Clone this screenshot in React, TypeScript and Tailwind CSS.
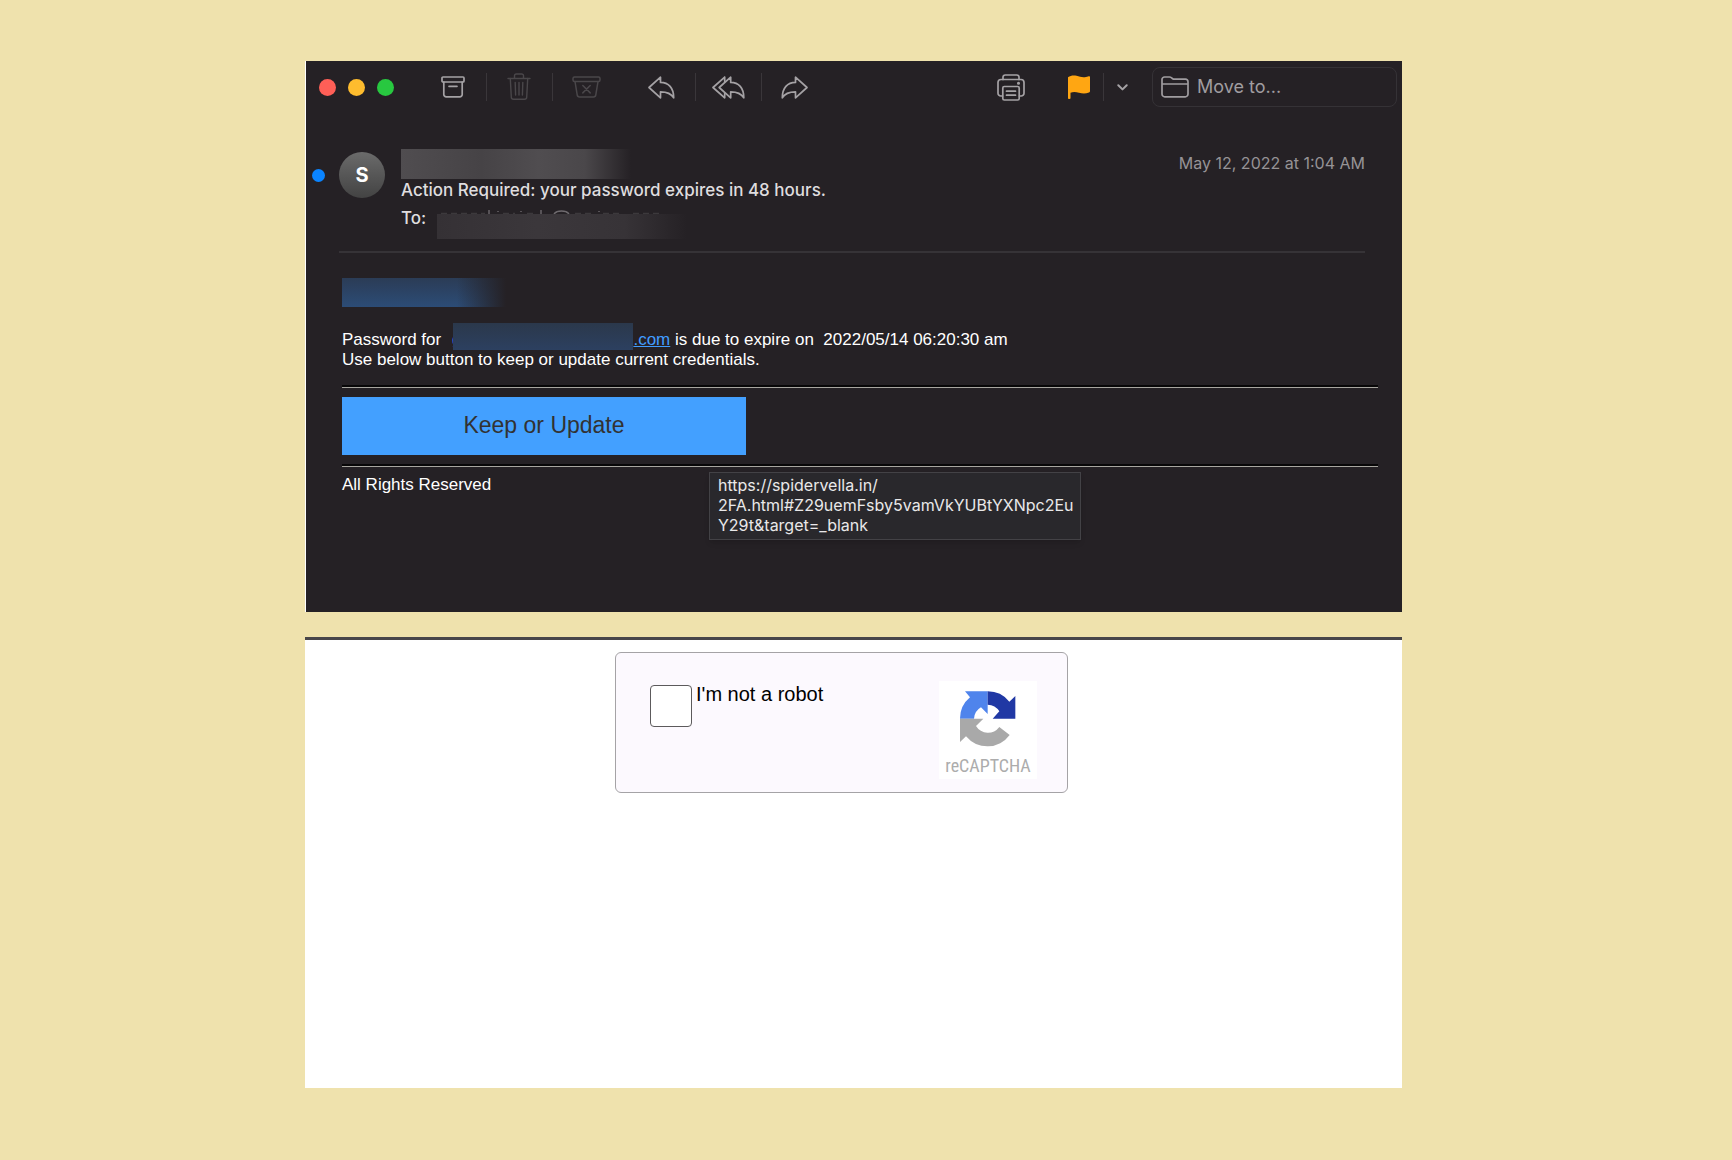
import React from 'react';

interface IconButtonProps {
  label: string;
  className?: string;
  children: React.ReactNode;
}

const IconButton: React.FC<IconButtonProps> = ({ label, className = '', children }) => (
  <button type="button" aria-label={label} className={`flex h-10 items-center justify-center ${className}`}>
    {children}
  </button>
);

const Separator = () => <span className="h-7 w-px shrink-0 bg-[#3a363a]" />;

const stroke = {
  fill: 'none',
  stroke: 'currentColor',
  strokeWidth: 1.7,
  strokeLinecap: 'round' as const,
  strokeLinejoin: 'round' as const,
};

const ArchiveIcon = () => (
  <svg width="24" height="22" viewBox="0 0 24 22" {...stroke}>
    <rect x="1" y="1" width="22" height="5" rx="1" />
    <path d="M2.8 6v12.5a2.4 2.4 0 0 0 2.4 2.4h13.6a2.4 2.4 0 0 0 2.4-2.4V6M8 10.3h8" />
  </svg>
);

const TrashIcon = () => (
  <svg width="24" height="28" viewBox="0 0 24 28" {...stroke} strokeWidth={1.4}>
    <path d="M1 5.5h22M7.5 5.5V2.8A1.8 1.8 0 0 1 9.3 1h5.4a1.8 1.8 0 0 1 1.8 1.8v2.7" />
    <path d="M3.3 5.5l1 18.7a2.2 2.2 0 0 0 2.2 2.1h11a2.2 2.2 0 0 0 2.2-2.1l1-18.7M8.2 9.5l.4 12.5M12 9.5V22M15.8 9.5l-.4 12.5" />
  </svg>
);

const JunkIcon = () => (
  <svg width="29" height="22" viewBox="0 0 29 22" {...stroke} strokeWidth={1.5}>
    <rect x="1" y="1" width="27" height="4.5" rx="1.5" />
    <path d="M3 5.5l2.2 13.4a2.3 2.3 0 0 0 2.3 2h14a2.3 2.3 0 0 0 2.3-2L26 5.5M10.8 9.5l7.4 7.4M18.2 9.5l-7.4 7.4" />
  </svg>
);

const ReplyIcon = ({ className = '' }) => (
  <svg width="27" height="23" viewBox="0 0 27 23" className={className} {...stroke}>
    <path d="M1 11.5L12.5 1.2v5.2C20.5 6.4 25.7 12 25.7 21.8 23 17 19 15.8 12.500 15.8v6z" />
  </svg>
);

const ReplyAllIcon = () => (
  <svg width="33" height="23" viewBox="0 0 33 23" {...stroke}>
    <path d="M7.2 11.5L18.7 1.2v5.2C26.7 6.4 31.8 12 31.8 21.8 29 17 25 15.8 18.7 15.8v6z" />
    <path d="M12.7 1.2L1 11.5l11.7 10.3V17.5M12.7 1.2v4.3" />
  </svg>
);

const PrinterIcon = () => (
  <svg width="28" height="27" viewBox="0 0 28 27" {...stroke}>
    <path d="M6 5.5V3.3A2.2 2.2 0 0 1 8.2 1h11.6A2.2 2.2 0 0 1 22 3.3v2.2" />
    <path d="M5.5 22H3.8A2.8 2.8 0 0 1 1 19.2V8.5a3 3 0 0 1 3-3h20a3 3 0 0 1 3 3v10.7a2.8 2.8 0 0 1-2.8 2.8h-1.7" />
    <rect x="5.8" y="12.5" width="16.4" height="13.5" rx="1.5" />
    <path d="M9.5 17.2h9M9.5 21.2h9" />
    <circle cx="21.5" cy="9.2" r="0.7" fill="currentColor" />
  </svg>
);

const FlagIcon = () => (
  <svg width="22" height="24" viewBox="0 0 22 24">
    <path
      fill="#ffa612"
      d="M0 2.2C2.5.5 5.5 0 8.5.8c3.5 1 6 2 9.5 1.2 1.5-.3 2.5-.8 3.4-.8.4 0 .6.3.6.8V16c0 .8-.4 1.2-1 1.4-3.5 1.4-6.5 1.2-10 .3-3-.8-6-1-8.5 0v5.5c0 .5-.4.8-1.2.8S0 23.7 0 23.2z"
    />
  </svg>
);

const ChevronIcon = () => (
  <svg width="11" height="7" viewBox="0 0 11 7" {...stroke} strokeWidth={2}>
    <path d="M1.3 1.2l4.2 4.2 4.2-4.2" />
  </svg>
);

const FolderIcon = () => (
  <svg width="28" height="22" viewBox="0 0 28 22" {...stroke}>
    <path d="M1 18V3.5A2.5 2.5 0 0 1 3.5 1h5c.9 0 1.5.3 2.1.8l.8.7c.6.5 1.1.7 2 .7H24.500A2.5 2.5 0 0 1 27 5.7V18a2.8 2.8 0 0 1-2.8 2.8H3.8A2.8 2.8 0 0 1 1 18zM1 8h26" />
  </svg>
);

const RecaptchaLogo = () => (
  <svg width="56" height="56" viewBox="0 0 168 168">
    <path fill="#4f84ec" d="M15 1H83V69L63 49A42 42 0 0 0 42 83H0A83 83 0 0 1 30 19z" />
    <path fill="#2038a4" d="M83 1A83 83 0 0 1 148 32L166 15V83H98L118 61A42 42 0 0 0 83 41z" />
    <path fill="#a9a9a9" d="M0 83H70L48 105A42 42 0 0 0 118 108L149 132A83 83 0 0 1 18 136L0 153z" />
  </svg>
);

// tops of the letters that stick out above the masked recipient
const MaskedTextTops = () => (
  <svg width="226" height="4" viewBox="0 0 226 4" fill="none" stroke="#6e6a6e" strokeWidth="1.4" className="ml-[2px]">
    <path d="M50 0V4M59 1v1M82 1v1M102 0V4M160 1v1" />
    <path d="M115 4C118 0 127 0 130 4" />
    <path d="M2 3.500h44M64 3.500h12M88 3.500h10M136 3.500h20M164 3.500h20M194 3.500h30" stroke="#3c393c" strokeDasharray="6 4" />
  </svg>
);

const Toolbar = () => (
  <div className="flex h-[52px] items-center pr-[5px] pl-[13px] text-[#a5a2a5]">
    <div className="flex gap-3">
      <button type="button" aria-label="Close" className="size-[17px] rounded-full bg-[#ff5f57]" />
      <button type="button" aria-label="Minimize" className="size-[17px] rounded-full bg-[#febc2e]" />
      <button type="button" aria-label="Zoom" className="size-[17px] rounded-full bg-[#28c840]" />
    </div>

    <div className="ml-[26px] flex items-center">
      <IconButton label="Archive" className="w-[66px] pr-px"><ArchiveIcon /></IconButton>
      <Separator />
      <IconButton label="Delete" className="w-[65px] pr-px text-[#4a474a]"><TrashIcon /></IconButton>
      <Separator />
      <IconButton label="Junk" className="w-[66px] text-[#4a474a]"><JunkIcon /></IconButton>
    </div>

    <div className="ml-[10px] flex items-center">
      <IconButton label="Reply" className="w-[66px] pr-px"><ReplyIcon /></IconButton>
      <Separator />
      <IconButton label="Reply all" className="w-[65px] pr-px"><ReplyAllIcon /></IconButton>
      <Separator />
      <IconButton label="Forward" className="w-[66px] pr-px"><ReplyIcon className="-scale-x-100" /></IconButton>
    </div>

    <div className="ml-auto flex items-center">
      <IconButton label="Print" className="mr-5 w-12 pr-px"><PrinterIcon /></IconButton>
      <IconButton label="Flag" className="w-12"><FlagIcon /></IconButton>
      <Separator />
      <IconButton label="Flag options" className="mr-3 w-9"><ChevronIcon /></IconButton>
      <button
        type="button"
        className="flex h-10 w-[245px] items-center gap-2 rounded-lg border border-[#353236] pl-2 text-lg text-[#a09da0]"
      >
        <FolderIcon />
        Move to...
      </button>
    </div>
  </div>
);

const MessageHeader = () => (
  <header className="mr-[37px] flex pt-9 pl-[6px]">
    <span className="mt-[20px] size-[13px] shrink-0 rounded-full bg-[#0a84ff]" />
    <div className="ml-[14px] flex flex-1 border-b-2 border-[#363337] pb-3">
      <div className="mt-[3px] flex size-[46px] items-center justify-center rounded-full bg-linear-to-b from-[#6b6b6b] to-[#434343] text-xl font-bold text-white">
        S
      </div>
      <div className="ml-4 text-[17px] font-medium text-[#dfdddf]">
        <div className="h-[30px] w-[230px] bg-[linear-gradient(90deg,#504d50,#464346_35%,#504d50_60%,#4a474a_80%,#252125)]" />
        <h1 className="h-6 leading-[22px]">Action Required: your password expires in 48 hours.</h1>
        <div className="flex h-9">
          <span className="h-[30px] leading-[30px]">To:</span>
          <div className="ml-[11px] pt-[7px]">
            <MaskedTextTops />
            <div className="h-[25px] w-[250px] bg-[linear-gradient(90deg,#353135,#3b373b_40%,#373337_75%,#252125)]" />
          </div>
        </div>
      </div>
      <time className="ml-auto pt-1 text-base leading-5 text-[#969396]">May 12, 2022 at 1:04 AM</time>
    </div>
  </header>
);

const Rule = () => <hr className="h-[3px] border-t-2 border-b border-t-[#080708] border-b-[#a8a6a0]" />;

const MessageBody = () => (
  <div className="mr-6 ml-9 pt-[25px] font-['Liberation_Sans',Arial,sans-serif] text-[17px] leading-5 text-white">
    <div className="h-[29px] w-[164px] bg-[linear-gradient(90deg,transparent_70%,#252125),linear-gradient(#2b3c56,#2c4c76)]" />
    <div className="pt-[15px]">
      <p className="flex h-[28px] items-end whitespace-pre">
        <span>Password for </span>
        <a href="#account" className="ml-[6px] flex items-end text-[#419cff]">
          <span className="underline">g</span>
          <span className="relative -ml-2 h-[27px] w-[180px] bg-linear-to-b from-[#2b384b] to-[#2c4060]" />
          <span className="underline">.com</span>
        </a>
        <span> is due to expire on  2022/05/14 06:20:30 am</span>
      </p>
      <p>Use below button to keep or update current credentials.</p>
    </div>
    <div className="pt-[15px]">
      <Rule />
    </div>
    <div className="relative my-[9px] w-[404px]">
      <button type="button" className="h-[58px] w-full bg-[#43a0ff] pb-[2px] text-[23px] text-[#323232]">
        Keep or Update
      </button>
      <div
        role="tooltip"
        className="absolute top-[75px] left-[367px] w-[372px] border border-[#434246] bg-[#29282c] px-2 pt-[2px] pb-1 font-[Inter,sans-serif] text-base leading-5 text-[#e9e8e9] shadow-md"
      >
        https://spidervella.in/
        <br />
        2FA.html#Z29uemFsby5vamVkYUBtYXNpc2Eu
        <br />
        Y29t&amp;target=_blank
      </div>
    </div>
    <Rule />
    <p className="pt-2">All Rights Reserved</p>
  </div>
);

const CaptchaPanel = () => (
  <section className="mt-[25px] min-h-[451px] border-t-[3px] border-[#48464a] bg-white px-[310px] pt-3 font-['Liberation_Sans',Arial,sans-serif]">
    <div className="flex h-[141px] w-[453px] items-start rounded-md border border-[#a5a3a6] bg-[#fcf9fe] pt-7 pr-[30px] pl-[34px]">
      <input
        id="robot"
        type="checkbox"
        className="mt-1 size-[42px] appearance-none rounded border border-[#5c5a5c] bg-white"
      />
      <label htmlFor="robot" className="mt-px ml-1 text-xl leading-6 text-black">
        I'm not a robot
      </label>
      <div className="ml-auto flex h-[98px] w-[98px] flex-col items-center bg-white pt-[10px]">
        <RecaptchaLogo />
        <span className="mt-[9px] font-['Roboto_Condensed','Liberation_Sans_Narrow',Roboto,sans-serif] text-lg leading-5 text-[#acacac]">
          reCAPTCHA
        </span>
      </div>
    </div>
  </section>
);

export default function App() {
  return (
    <main className="min-h-screen bg-[#efe2ad] pt-[61px] pr-[330px] pb-[72px] pl-[305px] font-[Inter,sans-serif]">
      <section className="min-h-[551px] border-l border-white bg-[#252125]">
        <Toolbar />
        <MessageHeader />
        <MessageBody />
      </section>
      <CaptchaPanel />
    </main>
  );
}
